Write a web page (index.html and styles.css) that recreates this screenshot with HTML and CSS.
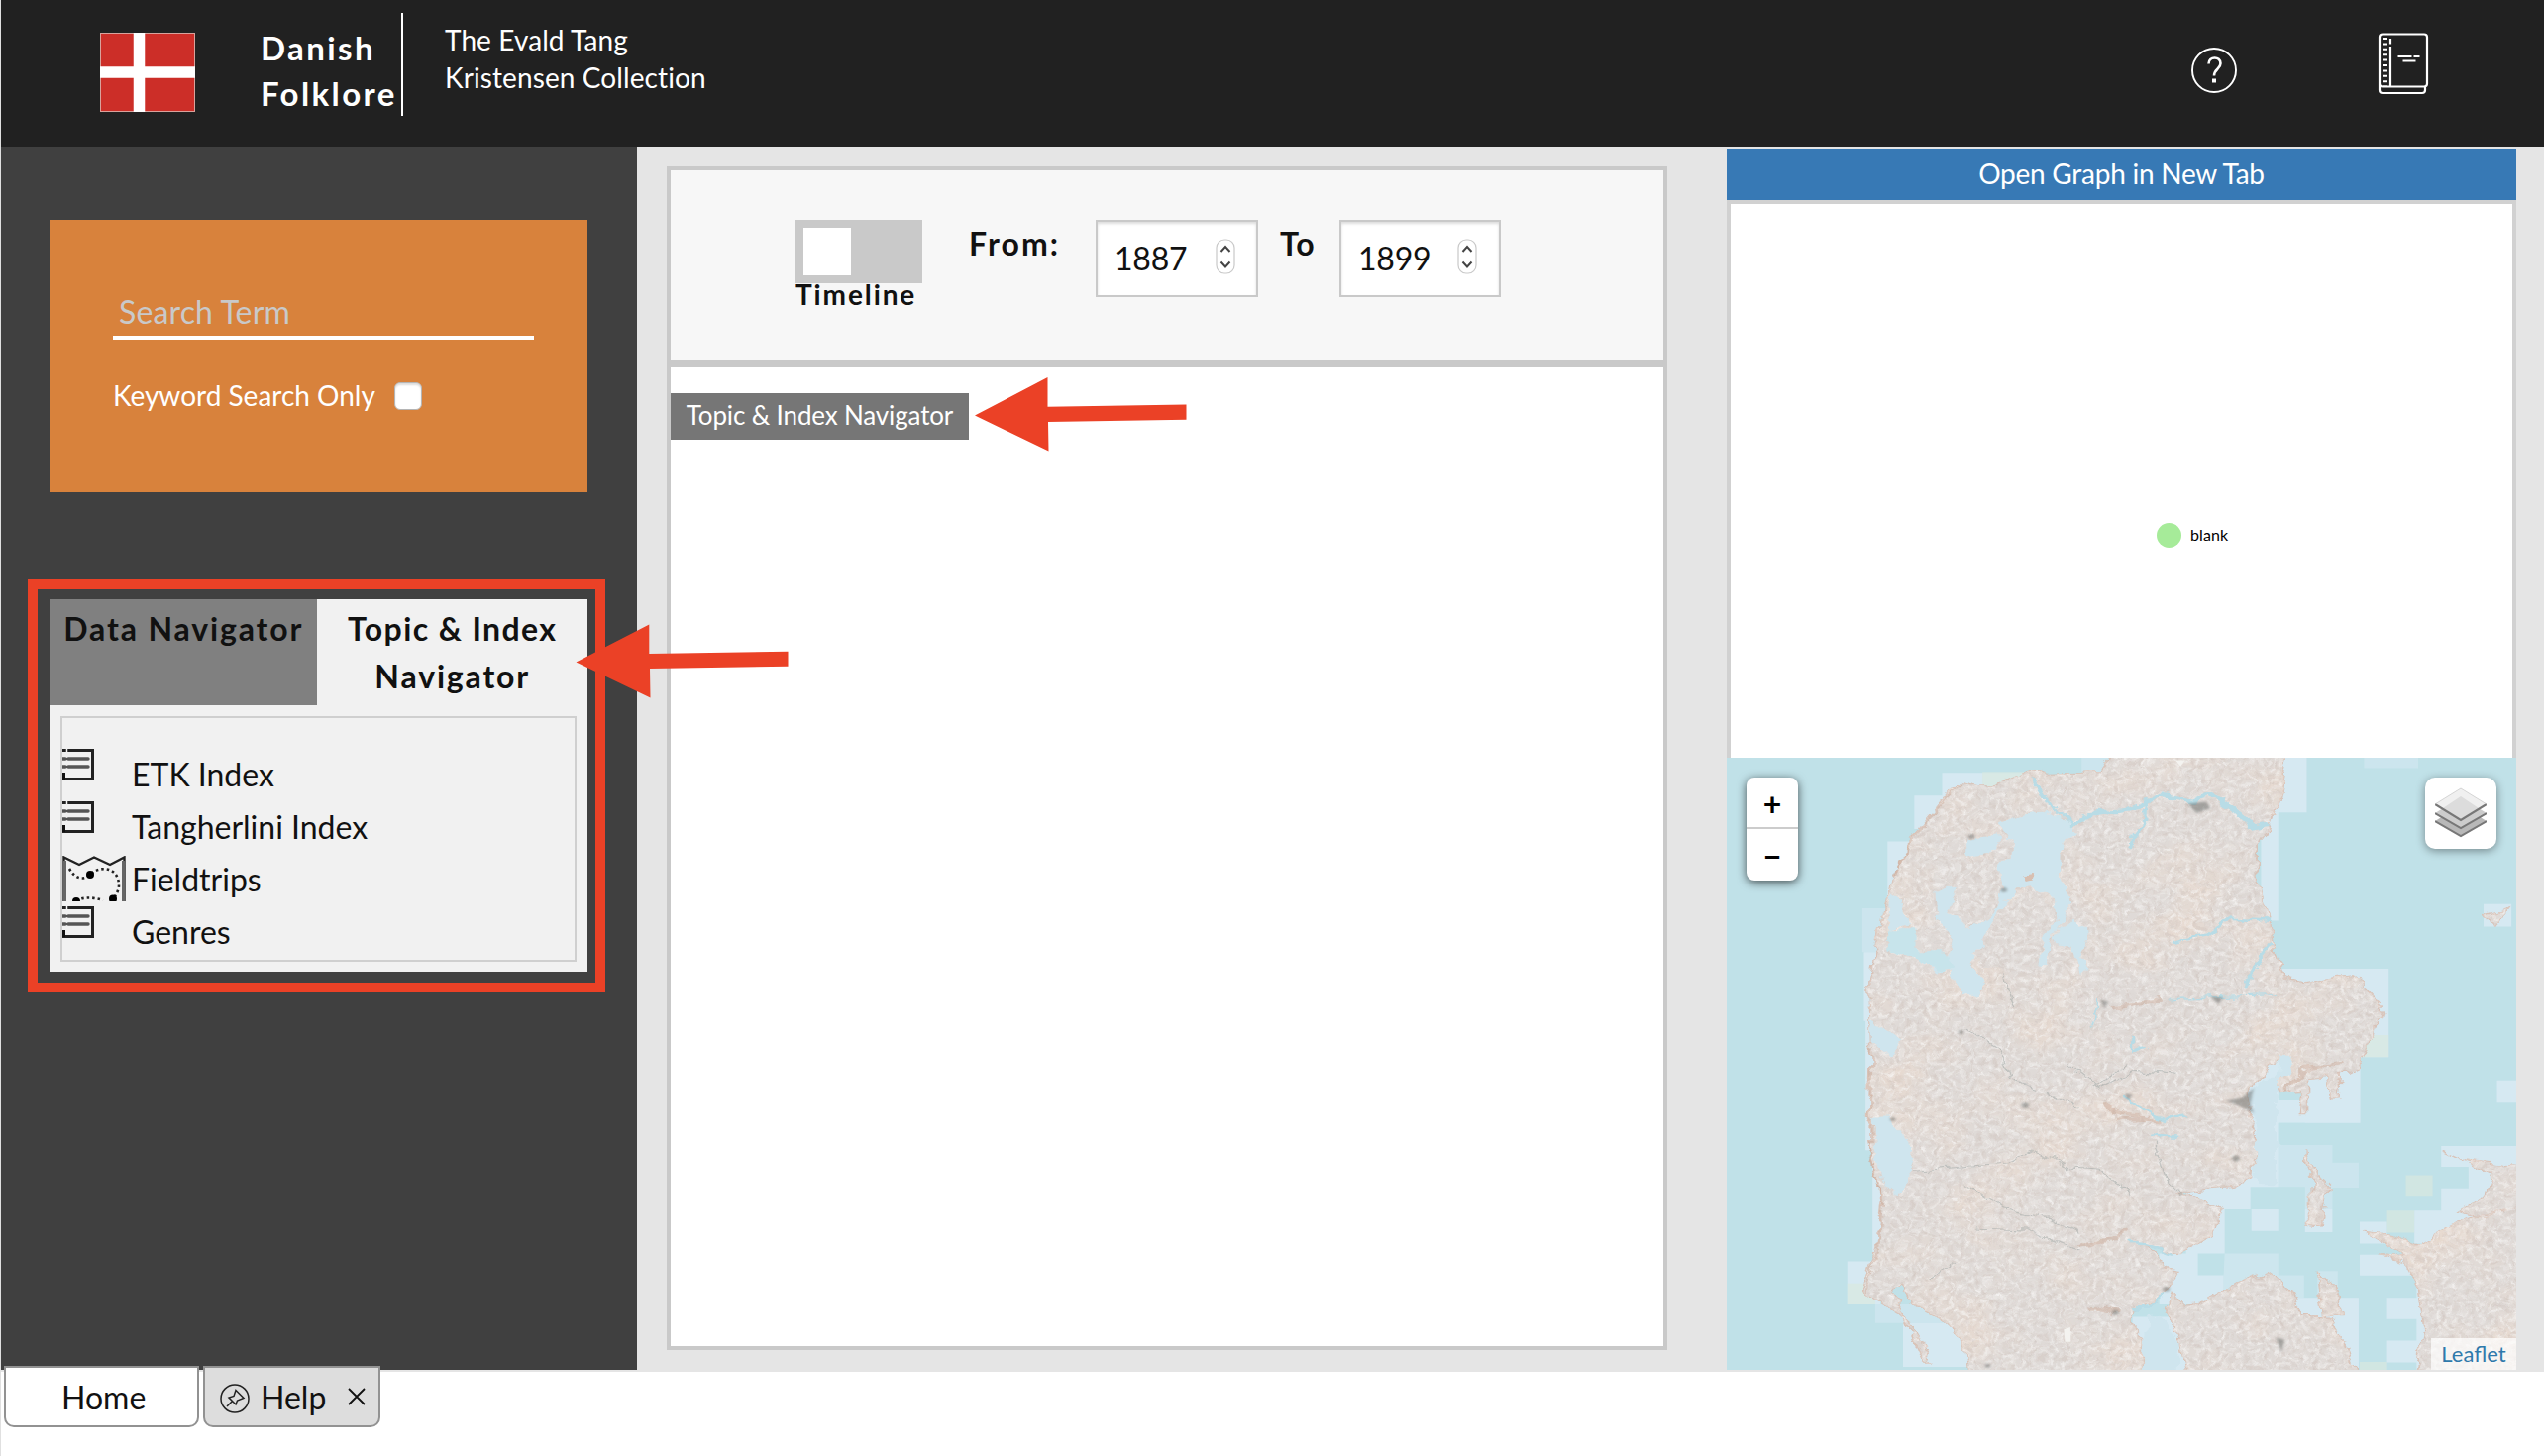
FILE: index.html
```html
<!DOCTYPE html>
<html lang="en">
<head>
<meta charset="utf-8">
<title>Danish Folklore</title>
<link rel="stylesheet" href="styles.css">
</head>
<body>
<div class="app">
  <header class="header">
    <svg class="flag" viewBox="0 0 96 80"><rect width="96" height="80" fill="#d9a29c"/><rect x="1" y="1" width="94" height="78" fill="#cc2e28"/><path d="M39.500 0v80M0 40h96" stroke="#fff" stroke-width="11.500"/></svg>
    <h1 class="brand">Danish<br>Folklore</h1>
    <p class="tagline">The Evald Tang<br>Kristensen Collection</p>
    <svg class="help-icon" viewBox="0 0 46 46" fill="none" stroke="#fff"><circle cx="23" cy="23" r="22" stroke-width="1.900"/><path d="M17.500 16.500c0-8 12-8 12-.5 0 6-6.500 5.500-6.500 12.500" stroke-width="2.600"/><path d="M23 31.500v4" stroke-width="4"/></svg>
    <svg class="book-icon" viewBox="0 0 52 63" fill="none" stroke="#fff" stroke-width="2.200"><path d="M5 1.500h42q3 0 3 3v47q0 3-3 3H5q-3 0-3-3v-47q0-3 3-3zM2 51v7q0 3 3 3h40q3 0 3-3v-4M13 6v5.500M13 14v40"/><path d="M7.500 5v50" stroke-width="5" stroke-dasharray="2 3.400"/><path d="M20.500 24h14M36.500 24h6M25.500 28.500h13"/></svg>
  </header>
  <main class="content">
    <aside class="sidebar">
      <section class="search">
        <div class="search-field">Search Term</div>
        <label class="keyword"><span class="keyword-text">Keyword Search Only</span><span class="checkbox"></span></label>
      </section>
      <section class="navigator">
        <div class="nav-tabs"><div class="nav-tab">Data Navigator</div><div class="nav-tab active"><span class="tight">Topic &amp; Index</span> Navigator</div></div>
        <div class="nav-panel">
          <ul class="nav-list">
            <li><svg class="item-icon list-icon" viewBox="0 0 32 32"><use href="#list"/></svg>ETK Index</li>
            <li><svg class="item-icon list-icon" viewBox="0 0 32 32"><use href="#list"/></svg>Tangherlini Index</li>
            <li><svg class="item-icon trip-icon" viewBox="0 0 64 46" fill="none" stroke="#222"><path d="M1.500 46V1.500L17 9 32 1.500 48 9l14.500-7.500V46" stroke-width="2.400"/><path d="M2.500 5v41M61.500 5v41" stroke="#666" stroke-width="3"/><path d="M7 13c7 12 16 11 21 6 8-9 29-9 29 11q0 6-6 14M14 45q12-5 27 0" stroke-width="2.600" stroke-dasharray="2.500 3"/><g fill="#000" stroke="none"><circle cx="28" cy="19" r="4"/><circle cx="51" cy="43.500" r="4"/><circle cx="14" cy="46" r="4"/></g></svg>Fieldtrips</li>
            <li><svg class="item-icon list-icon" viewBox="0 0 32 32"><use href="#list"/></svg>Genres</li>
          </ul>
        </div>
      </section>
    </aside>
    <section class="center">
      <div class="timeline-bar">
        <div class="timeline"><div class="toggle"><i></i></div><span>Timeline</span></div>
        <span class="range-label">From:</span>
        <div class="year">1887<svg class="spinner" viewBox="0 0 20 36"><use href="#spin"/></svg></div>
        <span class="range-label to">To</span>
        <div class="year second">1899<svg class="spinner" viewBox="0 0 20 36"><use href="#spin"/></svg></div>
      </div>
      <div class="workspace"><div class="crumb">Topic &amp; Index Navigator</div></div>
    </section>
    <section class="right">
      <div class="graph-button">Open Graph in New Tab</div>
      <div class="graph"><div class="node"><i></i>blank</div></div>
      <div class="map">
        <svg class="map-art" viewBox="43 59 1473 1468" preserveAspectRatio="none">
          <defs>
            <filter id="coast" x="-2%" y="-2%" width="104%" height="104%"><feTurbulence type="fractalNoise" baseFrequency=".03" numOctaves="4" seed="4"/><feDisplacementMap in="SourceGraphic" scale="28" xChannelSelector="R" yChannelSelector="G"/></filter>
            <filter id="grain" x="0" y="0" width="100%" height="100%"><feTurbulence type="fractalNoise" baseFrequency=".09 .075" numOctaves="3" seed="9"/><feColorMatrix values="0 0 0 0 .62  0 0 0 0 .54  0 0 0 0 .50  1.500 0 0 0 -.68"/><feComposite in2="SourceAlpha" operator="in"/></filter>
            <filter id="light" x="0" y="0" width="100%" height="100%"><feTurbulence type="fractalNoise" baseFrequency=".1 .08" numOctaves="3" seed="31"/><feColorMatrix values="0 0 0 0 .92  0 0 0 0 .91  0 0 0 0 .90  0 1.800 0 0 -.75"/><feComposite in2="SourceAlpha" operator="in"/></filter>
            <filter id="warm" x="0" y="0" width="100%" height="100%"><feTurbulence type="fractalNoise" baseFrequency=".007" numOctaves="5" seed="12"/><feColorMatrix values="0 0 0 0 .82  0 0 0 0 .70  0 0 0 0 .62  0 0 2.600 0 -1.150"/><feComposite in2="SourceAlpha" operator="in"/></filter>
            <filter id="veins" x="0" y="0" width="100%" height="100%"><feTurbulence type="turbulence" baseFrequency=".016 .013" numOctaves="3" seed="22"/><feColorMatrix values="0 0 0 0 .64  0 0 0 0 .60  0 0 0 0 .58  -9 0 0 0 .75"/><feComposite in2="SourceAlpha" operator="in"/></filter>
            <filter id="soft"><feGaussianBlur stdDeviation="3"/></filter>
            <g id="land">
              <path d="M770 40H1095L1085 100 1075 170 1055 240 1035 270V330L1045 390 1060 450 1065 520 1085 590 1120 600 1225 580 1240 615 1268 655 1255 730 1225 800 1195 820 1190 880H1175L1165 825 1130 830V915H1115L1120 860 1075 865 1070 835 1095 780 1060 800 1022 860 1028 910 1022 940 1035 990 1030 1060 990 1090 895 1105 970 1140 950 1210 890 1250 830 1230 865 1290 890 1295 865 1340 850 1370 800 1390V1420L825 1450V1545H497L490 1460 450 1410 390 1370 370 1320 355 1330 380 1400 430 1510H415L375 1400 300 1340 325 1230 335 1120 310 980 315 750 312 600 330 500 350 360 400 240 480 115 540 130 610 90 650 100 740 95Z"/>
              <path d="M880 1345L900 1375 930 1370 1000 1320 1055 1295 1095 1330 1120 1400 1165 1400 1200 1470 1225 1545H905L890 1460 870 1390Z"/>
              <path d="M1150 1290L1175 1330 1195 1400 1160 1400ZM1126 1000L1135 1040 1170 1090 1155 1180 1130 1175 1130 1110 1145 1090 1125 1035ZM1455 440L1502 422 1480 460ZM1240 1198L1290 1205 1330 1230 1370 1200 1430 1165 1480 1155 1516 1140H1540V1545H1330L1345 1430 1335 1330 1310 1270 1265 1255 1320 1260ZM1380 1000L1420 1025 1540 1045V1130L1460 1165 1410 1150 1460 1110 1475 1060Z"/>
            </g>
            <path id="isles" d="M456 295L480 300 490 315 550 300 555 255 578 260V300L555 320 560 370 545 440 495 470 460 430 480 370 440 380 430 350ZM505 530L545 470 590 390 625 372 662 445 640 490 625 555 580 575 525 560Z"/>
          </defs>
          <rect x="43" y="59" width="1473" height="1468" fill="#c0e1e8"/>
          <g fill="#d6e9f2">
            <path d="M445 95H610V150H445ZM393 150H470V230H393ZM343 260H400V420H343ZM299 525H350V690H299ZM302 690H350V1000H302ZM315 1000H380V1250H315ZM268 1267H330V1370H268ZM372 1415H500V1520H372Z"/>
            <path d="M296 420H360V525H296ZM320 1370H500V1415H320ZM705 59H780V95H705ZM1232 59H1333V84H1232ZM1072 988H1173V1030H1222V1090H1173V1142H1122V1088H1072Z" opacity=".55"/>
            <path d="M1060 59H1125V190H1060ZM1040 190H1072V450H1040ZM1072 565H1278V777H1225V935H1072V1088H1020V1142H972V1248H900V800H1000ZM1022 1142H1072V1194H1022ZM1122 1142H1173V1197H1122ZM1455 410H1507V464H1455ZM1480 833H1516V886H1480ZM1376 990H1516V1200H1376V1092H1427V1040H1376ZM1224 1172H1275V1224H1224ZM1326 1145H1376V1224H1326ZM1224 1251H1340V1301H1224ZM1275 1354H1345V1405H1275ZM1275 1457H1345V1509H1275ZM1072 1354H1222V1527H1072ZM850 1248H922V1300H970V1370H850ZM800 1400H950V1527H800ZM1310 1250H1360V1527H1330V1300H1310Z"/>
            <path d="M972 1248H1072V1300H1120V1354H970V1300ZM1145 1290H1183V1354H1145Z" opacity=".6"/>
          </g>
          <g fill="#d9e8df" opacity=".7"><path d="M520 93H600V130H520ZM268 1320H320V1370H268ZM1275 1145H1326V1198H1275ZM1224 1508H1275V1527H1224ZM1225 724H1278V777H1225ZM1310 1060H1360V1112H1310Z"/></g>
          <path d="M1072 835H1122V881H1072ZM1072 935H1122V988H1072Z" fill="#c0e1e8"/>
          <g filter="url(#coast)">
            <g transform="translate(-3 -2)">
            <use href="#land" fill="#dfdad7" stroke="#d9c3b8" stroke-width="3"/>
            <use href="#land" filter="url(#warm)" opacity=".75"/>
            <use href="#land" filter="url(#veins)" opacity=".7"/>
            <use href="#land" filter="url(#light)"/>
            <use href="#land" filter="url(#grain)"/>
            <path d="M370 540H450L470 570 440 575 400 540ZM550 220L590 200 650 190 690 215 700 240 670 270 665 340 690 410 660 480 640 560H627L635 500 665 450 655 400 620 370 590 375 570 400 540 460 520 510 500 550 525 600 510 630 485 632 470 590 455 540 470 490 440 450 435 390 480 360 490 330 550 300 570 250ZM490 260L550 245 570 270 540 290 490 300ZM690 455L715 470 718 510 705 540 730 575 705 575 690 510 660 505 665 470ZM315 920H350L375 960 400 1050 370 1110 340 1090 320 1000ZM315 690L375 740 350 775 315 740ZM350 390L370 400 390 460 345 470ZM830 1400H850L890 1460 885 1545H825ZM1075 780H1100L1095 820 1070 835ZM1030 860L1050 830H1072V1088H1035Z" fill="#cfe5ee"/>
            <path d="M345 470H400V525H450L470 560 450 575 400 545 350 525Z" fill="#c7e4eb"/>
            <use href="#isles" fill="#dfdad7"/>
            <use href="#isles" filter="url(#veins)" opacity=".6"/>
            <use href="#isles" filter="url(#light)"/>
            <use href="#isles" filter="url(#grain)"/>
            <path d="M597 345L625 338 620 355 600 358Z" fill="#d8bfb1"/>
            <g fill="none" stroke="#b8dce6" stroke-linecap="round"><path d="M690 220L730 195 800 185 860 150 920 165 950 150 1000 195 1030 230 1055 225" stroke-width="10"/><path d="M830 155L825 210 805 240 800 275M620 115L640 160 690 215M880 500L940 485 985 445 1060 450M1020 610L1035 550 1060 510M805 730V765L830 755M790 880L860 930 900 920M840 965L890 970M800 1225L830 1228 880 1250M800 1385H840L860 1350" stroke-width="6"/><path d="M870 640L960 635 1070 630M740 640L725 710" stroke-width="3"/></g>
            </g>
          </g>
          <g fill="none" stroke="#a9afad" stroke-width="2.500" opacity=".6" filter="url(#coast)"><path d="M400 1050L480 1040 570 1030 610 1000 690 1045 740 1050 800 1110M490 710L550 760 570 830 620 850M680 790L740 850 800 810 880 820M490 1080L560 1140 640 1160 700 1200M510 1185L600 1190 700 1240M420 1310L470 1270M560 580L580 660M730 850L790 790M840 980L860 1060 900 1110M700 900L640 860"/></g>
          <g fill="none" stroke="#c2957d" stroke-width="9" opacity=".3" filter="url(#coast)"><path d="M745 890L770 910 850 930M770 930L830 925M700 1230L770 1215 790 1190M760 660L850 640M1080 860L1130 800 1190 790M720 1380L770 1390"/><path d="M314 750L309 1000 334 1120 324 1240 304 1340M349 350L399 240 479 118" stroke-width="4"/></g>
          <g fill="#666966" opacity=".5" filter="url(#soft)"><path d="M902 170L938 165 945 180 920 192ZM975 882L1005 875 1026 850 1020 890 1026 912 1000 895ZM740 640L754 645 748 662ZM945 632L970 635 960 650ZM1068 1450L1084 1455 1078 1485ZM785 865L800 868 792 882Z"/><circle cx="600" cy="893" r="7"/><circle cx="560" cy="376" r="6"/><circle cx="500" cy="248" r="6"/><circle cx="353" cy="926" r="5"/><circle cx="863" cy="1333" r="6"/><circle cx="768" cy="1390" r="6"/><circle cx="480" cy="717" r="5"/><circle cx="993" cy="1020" r="7"/><circle cx="530" cy="1517" r="5"/></g>
          <path d="M672 1430L684 1425 685 1460 674 1460ZM880 65H898L890 80Z" fill="#f4f3f0"/>
        </svg>
        <div class="zoom"><span>+</span><span>−</span></div>
        <div class="layers"><svg viewBox="0 0 52 52"><path d="M0 34L26 18 52 34 26 49Z" fill="#b8b8b8"/><path d="M0 34L26 49 52 34" fill="none" stroke="#777" stroke-width="2"/><path d="M0 26L26 10 52 26 26 41Z" fill="#ccc"/><path d="M0 26L26 41 52 26" fill="none" stroke="#777" stroke-width="2"/><path d="M0 17L26 1 52 17 26 33Z" fill="#f0f0f0"/><path d="M8 21L26 9 44 21 26 32Z" fill="#dcdcdc"/><path d="M0 17L26 33 52 17" fill="none" stroke="#777" stroke-width="2.200"/><path d="M0 17L26 1 52 17" fill="none" stroke="#ccc" stroke-width=".8"/></svg></div>
        <div class="attribution">Leaflet</div>
      </div>
    </section>
  </main>
  <footer class="tabs">
    <div class="tab home">Home</div>
    <div class="tab help"><svg class="pin" viewBox="0 0 30 30" fill="none" stroke="#222" stroke-width="1.500"><circle cx="15" cy="15" r="14"/><path d="M16 6.500L24 14.500 17.500 17 16 21 9 14 14 12.500ZM12.500 17.500L7 23"/></svg><span>Help</span><svg class="close" viewBox="0 0 18 18"><path d="M1 1L17 17M17 1L1 17" stroke="#111" stroke-width="1.800"/></svg></div>
  </footer>
  <div class="highlight"></div>
  <svg class="arrows" viewBox="0 0 2568 1470" fill="#eb4126"><path d="M984 419.500L1057.500 381V410.800L1197.500 408.500V423.800L1058 426 1058.500 455.500ZM581.500 668.500L655.300 630.500V660L795.500 657.700V672.700L656 675 656.500 704.500Z"/></svg>
  <svg class="symbols">
    <symbol id="list" viewBox="0 0 32 32"><path d="M0 1.500H30.500V30.500H1.500V24" fill="none" stroke="#222" stroke-width="3"/><path d="M0 24h3v7H0z" fill="#111"/><path d="M4.500 0v24" stroke="#f1f1f1" stroke-width="1.500"/><path d="M6 10H26M6 18H26M0 10h3M0 18h3" stroke="#555" stroke-width="3.400" stroke-linecap="round"/></symbol>
    <symbol id="spin" viewBox="0 0 20 36"><rect x="1" y="1" width="18" height="34" rx="8" fill="#fff" stroke="#c9c9c9" stroke-width="1.200"/><path d="M5.500 13L10 8l4.500 5M5.500 23.500L10 28.500l4.500-5" fill="none" stroke="#444" stroke-width="2"/></symbol>
  </svg>
</div>
</body>
</html>
```

FILE: styles.css
```css
* { box-sizing: border-box; }
body { margin: 0; background: #fff; color: #111; font: 32px/48px Lato, sans-serif; }
.app { position: relative; width: 2568px; height: 1470px; overflow: hidden; display: flex; flex-direction: column; border-left: 1px solid #e0e0e0; }
.header { height: 148px; flex: none; background: #212121; color: #fff; display: flex; align-items: flex-start; margin-left: -1px; border-left: 1px solid #444; }
.flag { width: 96px; height: 80px; margin: 33px 0 0 100px; }
.brand { width: 144px; height: 104px; margin: 13px 0 0 66px; padding-top: 12px; border-right: 2px solid #fff; font-size: 33px; line-height: 46px; font-weight: 700; letter-spacing: 2.4px; white-space: nowrap; }
.tagline { width: 400px; margin: 21px 0 0 42px; font-size: 28px; line-height: 38px; letter-spacing: .1px; }
.help-icon { width: 46px; height: 46px; margin: 48px 0 0 auto; }
.book-icon { width: 52px; height: 63px; margin: 33px 116px 0 142px; }
.content { height: 1237px; flex: none; background: #e5e5e5; display: flex; align-items: flex-start; margin-left: -1px; }
.sidebar { width: 643px; height: 1235px; flex: none; background: #404040; border-left: 1px solid #555; padding: 74px 50px 0 49px; }
.search { height: 275px; background: #d8823c; color: #fff; padding: 69px 54px 0 64px; }
.search-field { height: 52px; border-bottom: 4px solid #fff; color: #c9c9c9; padding-left: 6px; line-height: 48px; letter-spacing: .15px; }
.keyword { display: flex; align-items: center; height: 48px; margin-top: 33px; font-size: 28px; }
.keyword-text { height: 50px; }
.checkbox { width: 28px; height: 28px; margin-left: 19px; border: 1px solid #b5b5b5; border-radius: 6px; background: #fff; box-shadow: inset 0 2px 2px #ddd; }
.navigator { margin-top: 108px; height: 376px; background: #f1f1f1; display: flex; flex-direction: column; }
.nav-tabs { height: 107px; flex: none; display: flex; }
.nav-tab { width: 271px; background: #808080; padding-top: 6px; text-align: center; font-weight: 700; letter-spacing: 1.85px; }
.nav-tab.active { width: 273px; background: #f1f1f1; padding-left: 20px; padding-right: 20px; }
.tight { letter-spacing: 1.4px; }
.nav-panel { padding: 11px; flex: 1; }
.nav-list { height: 248px; margin: 0; padding: 31px 0 0; list-style: none; border: 2px solid #cfcfcf; }
.nav-list li { display: flex; height: 53px; line-height: 52px; }
.item-icon { flex: none; }
.list-icon { width: 32px; height: 32px; margin-right: 38px; }
.trip-icon { width: 64px; height: 46px; margin: 2px 6px 0 0; }
.center { width: 1010px; height: 1195px; margin: 20px 0 0 30px; flex: none; display: flex; flex-direction: column; }
.timeline-bar { height: 199px; flex: none; border: 4px solid #c9c9c9; background: #f7f7f7; padding: 50px 0 0 126px; display: flex; align-items: flex-start; }
.timeline { width: 128px; margin-right: 47px; display: flex; flex-direction: column; }
.timeline span { font-size: 28px; line-height: 22px; font-weight: 700; letter-spacing: 1.9px; }
.toggle { height: 64px; background: #c9c9c9; padding: 8px; }
.toggle i { display: block; width: 48px; height: 48px; background: #fff; }
.range-label { width: 128px; font-weight: 700; letter-spacing: 2.1px; }
.range-label.to { width: 59px; margin-left: 22px; letter-spacing: 1px; }
.year { width: 164px; height: 78px; border: 2px solid #c9c9c9; background: #fff; box-shadow: inset 0 2px 3px #ddd; padding: 0 21px 0 17px; display: flex; justify-content: space-between; line-height: 74px; letter-spacing: -.2px; }
.year.second { width: 163px; padding-right: 22px; margin-left: 1px; }
.spinner { width: 20px; height: 36px; margin-top: 17px; }
.workspace { flex: 1; border: 4px solid #c9c9c9; background: #fff; padding-top: 26px; }
.crumb { width: 301px; height: 47px; background: #767676; color: #fff; font-size: 26px; line-height: 45px; text-align: center; letter-spacing: -.15px; }
.right { width: 797px; height: 1235px; margin-left: 60px; padding-top: 2px; display: flex; flex-direction: column; }
.graph-button { height: 52px; background: #3779b5; color: #fff; font-size: 28px; line-height: 50px; text-align: center; letter-spacing: -.25px; }
.graph { height: 563px; border: 4px solid #d1d1d1; border-bottom: 0; background: #fff; padding: 321px 0 0 430px; }
.node { display: flex; align-items: center; gap: 9px; height: 26px; font-size: 16px; color: #000; letter-spacing: .1px; }
.node i { width: 25px; height: 25px; border-radius: 50%; background: #a6eb99; }
.map { position: relative; flex: 1; overflow: hidden; background: #c0e1e8; }
.map-art { display: block; width: 797px; height: 618px; }
.zoom { position: absolute; left: 20px; top: 20px; width: 52px; height: 104px; border-radius: 8px; background: #fff; box-shadow: 0 2px 10px rgba(0,0,0,.65); display: flex; flex-direction: column; }
.zoom span { height: 52px; text-align: center; font-weight: 700; color: #000; line-height: 54px; }
.zoom span:first-child { border-bottom: 2px solid #ccc; }
.layers { position: absolute; right: 20px; top: 20px; width: 72px; height: 72px; padding: 10px; border-radius: 10px; background: #fff; box-shadow: 0 2px 10px rgba(0,0,0,.4); }
.layers svg { display: block; width: 52px; height: 52px; }
.attribution { position: absolute; right: 0; bottom: 0; width: 86px; height: 32px; background: rgba(255,255,255,.7); color: #2f79ab; font-size: 22px; line-height: 32px; text-align: center; }
.tabs { display: flex; gap: 4px; margin: -6px 0 0 3px; }
.tab { height: 62px; border: 2px solid #929292; border-radius: 0 0 10px 10px; background: #fff; line-height: 60px; }
.home { width: 197px; padding-left: 56px; }
.help { width: 179px; background: #ddd; display: flex; align-items: center; padding-left: 15px; }
.pin { width: 30px; height: 30px; margin-top: 4px; }
.help span { margin-left: 11px; height: 58px; }
.close { width: 18px; height: 18px; margin-left: 22px; }
.highlight { position: absolute; left: 27px; top: 585px; width: 583px; height: 417px; border: 10px solid #eb4126; }
.arrows { position: absolute; left: -1px; top: 0; width: 2568px; height: 1470px; }
.symbols { position: absolute; width: 0; height: 0; }
```
